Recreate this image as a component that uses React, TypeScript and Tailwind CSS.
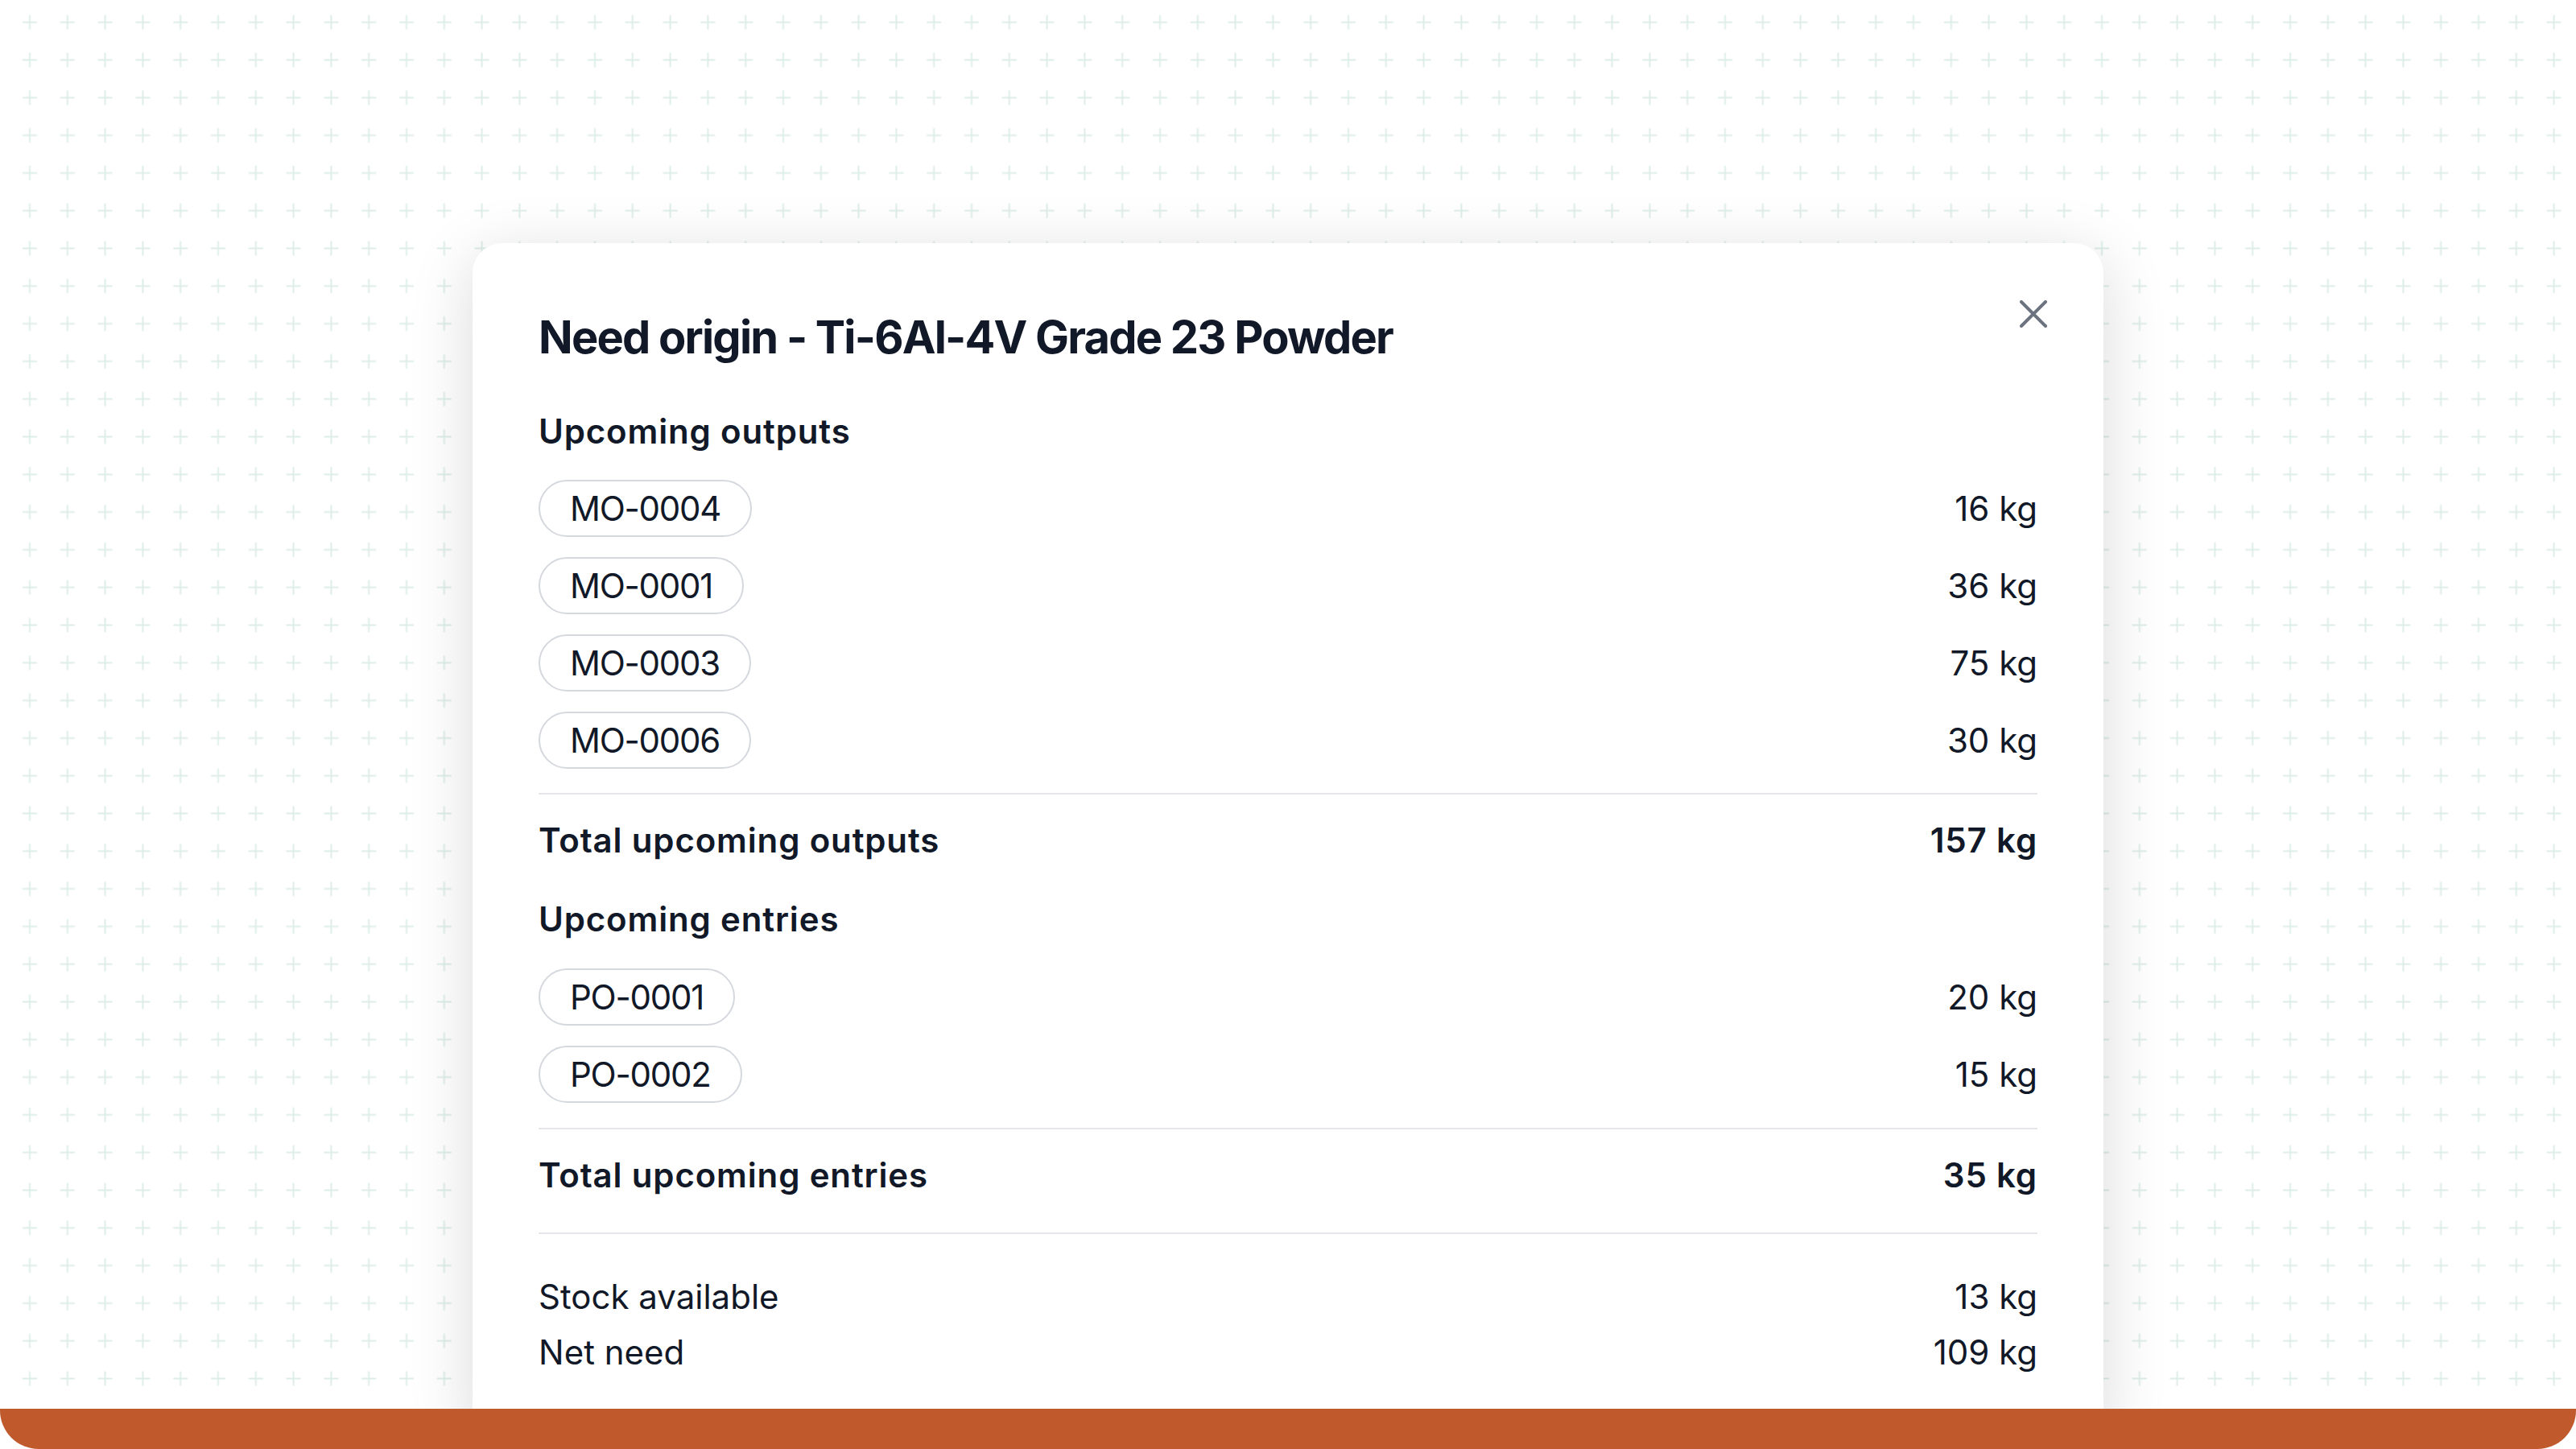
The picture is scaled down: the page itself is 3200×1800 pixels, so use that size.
import React from "react";

type Line = { id: string; qty: string };

const outputs: Line[] = [
  { id: "MO-0004", qty: "16 kg" },
  { id: "MO-0001", qty: "36 kg" },
  { id: "MO-0003", qty: "75 kg" },
  { id: "MO-0006", qty: "30 kg" },
];

const entries: Line[] = [
  { id: "PO-0001", qty: "20 kg" },
  { id: "PO-0002", qty: "15 kg" },
];

function CrossGrid() {
  return (
    <svg
      className="col-start-1 row-start-1 block"
      width="3200"
      height="1750"
      aria-hidden="true"
    >
      <defs>
        <pattern
          id="cross-grid"
          x="13.6"
          y="4.3"
          width="46.8"
          height="46.8"
          patternUnits="userSpaceOnUse"
        >
          <rect x="22.4" y="14.4" width="2" height="18" fill="#deede8" />
          <rect x="14.4" y="22.4" width="18" height="2" fill="#deede8" />
        </pattern>
      </defs>
      <rect width="3200" height="1750" fill="#ffffff" />
      <rect width="3200" height="1750" fill="url(#cross-grid)" />
    </svg>
  );
}

function Pill({ label }: { label: string }) {
  return (
    <span className="inline-flex h-[71px] items-center rounded-full border-2 border-[#d5d8de] px-[37px] text-[42px] leading-[59px] tracking-[-0.03em] text-[#111827]">
      {label}
    </span>
  );
}

function LineList({ items }: { items: Line[] }) {
  return (
    <div className="flex flex-col gap-[25px]">
      {items.map((it) => (
        <div key={it.id} className="flex h-[71px] items-center justify-between">
          <Pill label={it.id} />
          <span className="text-[42px] leading-[60px] text-[#111827]">{it.qty}</span>
        </div>
      ))}
    </div>
  );
}

function Divider({ className }: { className: string }) {
  return <div className={`h-[2px] w-full bg-[#e5e7eb] ${className}`} />;
}

function TotalRow({ label, value, className }: { label: string; value: string; className: string }) {
  return (
    <div className={`flex h-[60px] items-center justify-between text-[42px] font-semibold leading-[60px] tracking-[0.02em] text-[#111827] ${className}`}>
      <span>{label}</span>
      <span>{value}</span>
    </div>
  );
}

function PlainRow({ label, value, className }: { label: string; value: string; className: string }) {
  return (
    <div className={`flex h-[60px] items-center justify-between text-[42px] leading-[60px] text-[#111827] ${className}`}>
      <span>{label}</span>
      <span>{value}</span>
    </div>
  );
}

export default function App() {
  return (
    <div className="flex h-[1800px] w-[3200px] flex-col bg-white font-['Inter','Noto_Sans',sans-serif] antialiased">
      <div className="grid h-[1750px] grid-cols-1 grid-rows-[1750px] overflow-hidden">
        <CrossGrid />
        <div className="col-start-1 row-start-1 flex justify-center pt-[302px]">
          <div className="relative h-fit w-[2026px] rounded-[37px] bg-white px-[82px] pb-[82px] pt-[79px] shadow-[0_16px_80px_rgba(0,0,0,0.15)]">
            <button
              type="button"
              aria-label="Close"
              className="absolute right-[70px] top-[71px] flex h-[34px] w-[34px] items-center justify-center text-[#6b7280]"
            >
              <svg width="34" height="34" viewBox="0 0 34 34" fill="none">
                <path
                  d="M2 2 L32 32 M32 2 L2 32"
                  stroke="currentColor"
                  strokeWidth="4"
                  strokeLinecap="round"
                />
              </svg>
            </button>

            <h2 className="text-[56px] font-bold leading-[76px] tracking-[-0.032em] text-[#111827]">
              Need origin - Ti-6Al-4V Grade 23 Powder
            </h2>

            <h3 className="mt-[49px] text-[42px] font-semibold leading-[60px] tracking-[0.02em] text-[#111827]">
              Upcoming outputs
            </h3>
            <div className="mt-[30px]">
              <LineList items={outputs} />
            </div>
            <Divider className="mt-[30px]" />
            <TotalRow label="Total upcoming outputs" value="157 kg" className="mt-[27px]" />

            <h3 className="mt-[38px] text-[42px] font-semibold leading-[60px] tracking-[0.02em] text-[#111827]">
              Upcoming entries
            </h3>
            <div className="mt-[31px]">
              <LineList items={entries} />
            </div>
            <Divider className="mt-[31px]" />
            <TotalRow label="Total upcoming entries" value="35 kg" className="mt-[27px]" />

            <Divider className="mt-[41px]" />
            <PlainRow label="Stock available" value="13 kg" className="mt-[48px]" />
            <PlainRow label="Net need" value="109 kg" className="mt-[9px]" />
          </div>
        </div>
      </div>
      <div className="h-[50px] w-full rounded-b-[48px] bg-[#c0592b]" />
    </div>
  );
}
